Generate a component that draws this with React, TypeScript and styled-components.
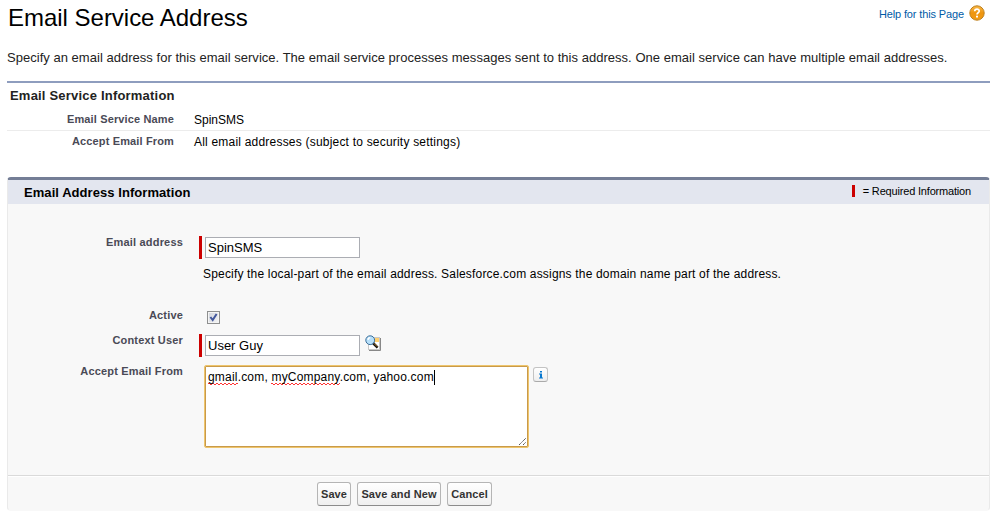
import React from "react";
import styled, { createGlobalStyle } from "styled-components";

const GlobalStyle = createGlobalStyle`
  html, body { margin: 0; padding: 0; background: #fff; overflow: hidden; }
  body, input, textarea, button { font-family: "Liberation Sans", Arial, sans-serif; }
  *, *::before, *::after { box-sizing: border-box; }
`;

const Page = styled.main`
  width: 992px;
  height: 511px;
  padding: 0 2px 0 7px;
  overflow: hidden;
  color: #000;
  font-size: 12px;
`;

const TopBar = styled.header`
  display: flex;
  justify-content: space-between;
  height: 47px;
`;

const Title = styled.h1`
  margin: 0;
  padding: 4px 0 0 1px;
  font-size: 24px;
  font-weight: 400;
  line-height: 28px;
  letter-spacing: -0.02px;
  white-space: nowrap;
`;

const HelpLink = styled.a`
  display: flex;
  align-items: flex-start;
  gap: 5px;
  padding: 5px 5px 0 0;
  color: #015ba7;
  font-size: 11px;
  line-height: 18px;
  letter-spacing: -0.13px;
  text-decoration: none;
  white-space: nowrap;
  svg { display: block; }
`;

const Intro = styled.p`
  margin: 0;
  height: 34px;
  padding-top: 2px;
  color: #222;
  font-size: 13px;
  line-height: 18px;
  letter-spacing: 0.027px;
  white-space: nowrap;
`;

const Summary = styled.section`
  height: 96px;
  border-top: 2px solid #8e9dbe;
`;

const SummaryTitle = styled.h2`
  margin: 0;
  padding: 5px 0 0 3px;
  height: 26px;
  color: #222;
  font-size: 13px;
  line-height: 16px;
  letter-spacing: 0.2px;
`;

const SummaryRow = styled.div<{ $line?: boolean }>`
  display: grid;
  grid-template-columns: 167px 1fr;
  column-gap: 20px;
  height: 22px;
  line-height: 22px;
  border-bottom: 1px solid ${(p) => (p.$line ? "#ececec" : "transparent")};
  & > label { line-height: 20px; letter-spacing: 0.14px; }
`;

const Label = styled.label`
  color: #4a4a56;
  font-size: 11px;
  font-weight: 700;
  text-align: right;
  letter-spacing: 0.18px;
  white-space: nowrap;
`;

const Value = styled.span<{ $tracking?: number }>`
  font-size: 12px;
  letter-spacing: ${(p) => p.$tracking ?? 0}px;
  white-space: nowrap;
`;

const Panel = styled.form`
  height: 334px;
  border: 1px solid #eaeaea;
  border-top: 3px solid #747e96;
  border-bottom-color: #f8f8f8;
  border-radius: 4px;
  background: #f8f8f8;
`;

const PanelHeader = styled.div`
  display: flex;
  justify-content: space-between;
  height: 24px;
  padding: 0 18px 0 16px;
  background: #e3e6ef;
`;

const PanelTitle = styled.h2`
  margin: 0;
  font-size: 13px;
  line-height: 25px;
  letter-spacing: 0.06px;
`;

const Legend = styled.span`
  display: flex;
  align-items: center;
  gap: 8px;
  height: 22px;
  font-size: 11px;
  letter-spacing: -0.18px;
  white-space: nowrap;
  &::before { content: ""; width: 3px; height: 12px; background: #c00; }
`;

const Fields = styled.div`
  height: 271px;
  padding-top: 32px;
`;

const Field = styled.div<{ $height: number }>`
  display: grid;
  grid-template-columns: 175px 1fr;
  column-gap: 16px;
  height: ${(p) => p.$height}px;
  & > ${Label} { line-height: 13px; }
`;

const Control = styled.div`
  display: flex;
  align-items: flex-start;
`;

const RequiredMark = styled.i`
  width: 3px;
  height: 23px;
  margin-right: 3px;
  background: #c00;
`;

const TextInput = styled.input`
  width: 155px;
  height: 21px;
  margin-top: 1px;
  padding: 0 2px;
  border: 1px solid #abadb3;
  background: #fff;
  color: #000;
  font-size: 13px;
  line-height: 19px;
  outline: none;
`;

const Hint = styled.p`
  margin: 0;
  height: 42px;
  padding-left: 195px;
  font-size: 12px;
  line-height: 14px;
  letter-spacing: 0.178px;
  white-space: nowrap;
`;

const CheckBox = styled.span`
  width: 13px;
  height: 13px;
  margin: 2px 0 0 8px;
  border: 1px solid #8e8f8f;
  background: linear-gradient(135deg, #cfd3dc, #f6f6f6);
  box-shadow: inset 0 0 0 1px #f4f4f4;
  svg { display: block; }
`;

const LookupButton = styled.span`
  margin: 1px 0 0 5px;
  svg { display: block; }
`;

const TextBox = styled.div`
  position: relative;
  width: 325px;
  height: 83px;
  margin-left: 5px;
  padding: 4px 0 0 3px;
  border: 1px solid #eec56c;
  border-radius: 2px;
  background: #fff;
  box-shadow: inset 0 0 0 1px #c99a4a;
  font-size: 12px;
  line-height: 14px;
  letter-spacing: 0.19px;
  white-space: nowrap;
`;

const Misspelled = styled.span`
  padding-bottom: 1px;
  background:
    repeating-linear-gradient(90deg, #f33 0 2px, transparent 2px 4px) 0 calc(100% - 1px) / 100% 1px no-repeat,
    repeating-linear-gradient(90deg, transparent 0 2px, #f33 2px 4px) 0 100% / 100% 1px no-repeat;
`;

const Caret = styled.i`
  display: inline-block;
  width: 1px;
  height: 15px;
  margin: -1px 0;
  vertical-align: -3px;
  background: #000;
`;

const Grip = styled.svg`
  position: absolute;
  right: 1px;
  bottom: 1px;
`;

const InfoButton = styled.span`
  width: 15px;
  height: 15px;
  margin: 2px 0 0 4px;
  border: 1px solid #c3c3c3;
  border-bottom-color: #aaa;
  border-radius: 3px;
  background: linear-gradient(#fff, #eee);
  svg { display: block; }
`;

const Actions = styled.div`
  display: flex;
  gap: 6px;
  padding: 6px 0 0 309px;
  border-top: 1px solid #dadada;
  box-shadow: inset 0 1px #fff;
`;

const Button = styled.button<{ $width: number }>`
  width: ${(p) => p.$width}px;
  height: 24px;
  padding: 0;
  border: 1px solid #b5b5b5;
  border-bottom-color: #8c8c8c;
  border-radius: 3px;
  background: linear-gradient(#fff, #f0f0f0);
  color: #333;
  font-size: 11px;
  font-weight: 700;
  letter-spacing: 0.1px;
  white-space: nowrap;
`;

const HelpIcon = () => (
  <svg width="16" height="16" viewBox="0 0 16 16">
    <defs>
      <linearGradient id="amber" x2="0" y2="1">
        <stop stopColor="#f8b849" />
        <stop offset=".5" stopColor="#ee950f" />
        <stop offset="1" stopColor="#f39b14" />
      </linearGradient>
    </defs>
    <circle cx="8" cy="8" r="7.2" fill="url(#amber)" stroke="#bd801f" />
    <path d="M5.7 6.3C5.8 3.2 10.4 3.4 10.2 6.2C10.1 7.8 8 7.7 8 9.5" fill="none" stroke="#fff" strokeWidth="1.7" />
    <rect x="7" y="10.7" width="2" height="1.8" fill="#fff" />
  </svg>
);

const CheckMark = () => (
  <svg width="11" height="11" viewBox="0 0 11 11">
    <path d="M2.4 5L4.7 8.1L8.6 2" fill="none" stroke="#42579c" strokeWidth="2" />
  </svg>
);

const LookupIcon = () => (
  <svg width="17" height="17" viewBox="0 0 17 17">
    <path d="M4 15.5H15.5V3" fill="none" stroke="#888" />
    <rect x="3.5" y="2.5" width="11" height="12" fill="#fff" stroke="#c8c8c8" />
    <rect x="9" y="3" width="5" height="4" fill="#ffd071" />
    <path d="M8 8L12.6 12.6" stroke="#111" strokeWidth="2.5" />
    <path d="M9 8.4L12.2 11.6" stroke="#b98232" />
    <circle cx="5.2" cy="5.2" r="4.4" fill="#b8e0fa" stroke="#386c98" />
    <path d="M3 4.9Q3.1 2.8 5.2 2.6" fill="none" stroke="#fff" strokeWidth="1.4" />
  </svg>
);

const InfoGlyph = () => (
  <svg width="13" height="13" viewBox="0 0 13 13">
    <path d="M6 3h2v1.5h-2zM5 5.5h3v4h1v1h-4v-1h1v-3h-1z" fill="#0878cf" />
  </svg>
);

export default function App() {
  return (
    <>
      <GlobalStyle />
      <Page>
        <TopBar>
          <Title>Email Service Address</Title>
          <HelpLink>Help for this Page<HelpIcon /></HelpLink>
        </TopBar>
        <Intro>
          Specify an email address for this email service. The email service processes messages sent to this address. One email service can have multiple email addresses.
        </Intro>
        <Summary>
          <SummaryTitle>Email Service Information</SummaryTitle>
          <SummaryRow $line><Label>Email Service Name</Label><Value>SpinSMS</Value></SummaryRow>
          <SummaryRow><Label>Accept Email From</Label><Value $tracking={0.205}>All email addresses (subject to security settings)</Value></SummaryRow>
        </Summary>
        <Panel>
          <PanelHeader>
            <PanelTitle>Email Address Information</PanelTitle>
            <Legend>= Required Information</Legend>
          </PanelHeader>
          <Fields>
            <Field $height={31}>
              <Label>Email address</Label>
              <Control><RequiredMark /><TextInput defaultValue="SpinSMS" /></Control>
            </Field>
            <Hint>Specify the local-part of the email address. Salesforce.com assigns the domain name part of the address.</Hint>
            <Field $height={25}>
              <Label>Active</Label>
              <Control><CheckBox><CheckMark /></CheckBox></Control>
            </Field>
            <Field $height={31}>
              <Label>Context User</Label>
              <Control>
                <RequiredMark /><TextInput defaultValue="User Guy" />
                <LookupButton><LookupIcon /></LookupButton>
              </Control>
            </Field>
            <Field $height={84}>
              <Label>Accept Email From</Label>
              <Control>
                <TextBox>
                  <Misspelled>gmail</Misspelled>.com, <Misspelled>myCompany</Misspelled>.com, yahoo.com<Caret />
                  <Grip width="9" height="9" viewBox="0 0 9 9"><path d="M1 8L8 1M5 8L8 5" stroke="#555" strokeDasharray="1.4 .4" /></Grip>
                </TextBox>
                <InfoButton><InfoGlyph /></InfoButton>
              </Control>
            </Field>
          </Fields>
          <Actions>
            <Button type="button" $width={34}>Save</Button>
            <Button type="button" $width={84}>Save and New</Button>
            <Button type="button" $width={45}>Cancel</Button>
          </Actions>
        </Panel>
      </Page>
    </>
  );
}
